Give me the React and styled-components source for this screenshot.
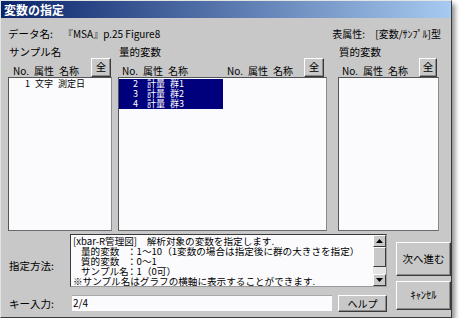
import styled, { createGlobalStyle } from "styled-components";

const GlobalStyle = createGlobalStyle`
  body {
    margin: 0;
    background: #ffffff;
    font-family: "Noto Sans CJK JP", "Liberation Sans", sans-serif;
  }
`;

const Window = styled.div`
  width: 452px;
  height: 318px;
  box-sizing: border-box;
  background: #c8c8c8;
  border: 1px solid;
  border-color: #e4e4e4 #3a3a3a #3a3a3a #e4e4e4;
  box-shadow: 3px 4px 5px rgba(0, 0, 0, 0.45);
  display: flex;
  flex-direction: column;
  font-size: 10px;
  color: #000;
`;

const TitleBar = styled.div`
  flex: none;
  height: 17px;
  background: linear-gradient(to right, #0a246a, #a6caf0);
  color: #fff;
  font-weight: bold;
  font-size: 12px;
  line-height: 17px;
  padding-left: 3px;
`;

const Content = styled.div`
  flex: 1;
  display: flex;
  flex-direction: column;
  padding: 0 10px 0 7px;
`;

const TopRow = styled.div`
  display: flex;
  align-items: center;
  height: 14px;
  margin-top: 9px;
  line-height: 14px;
`;

const Label = styled.span`
  display: inline-block;
  width: ${(p) => p.$width || "auto"};
  font-size: ${(p) => p.$size || "10.5px"};
  white-space: pre;
`;

const Spacer = styled.div`
  flex: 1;
`;

const Columns = styled.div`
  display: flex;
  margin-top: 5px;
`;

const Column = styled.div`
  width: ${(p) => p.$width}px;
  margin-left: ${(p) => p.$gap || 0}px;
  display: flex;
  flex-direction: column;
`;

const ColumnTitle = styled.div`
  height: 12px;
  line-height: 12px;
  font-size: 10.5px;
  padding-left: 1px;
`;

const SubRow = styled.div`
  display: flex;
  align-items: flex-end;
  height: 19px;
  padding-right: ${(p) => p.$inset || 1}px;
`;

const HeadCell = styled.div`
  display: flex;
  gap: 5px;
  width: ${(p) => (p.$width ? `${p.$width}px` : "auto")};
  padding-left: ${(p) => p.$indent || 4}px;
  line-height: 12px;
  font-size: 10px;
`;

const RaisedButton = styled.button`
  box-sizing: border-box;
  width: ${(p) => p.$w}px;
  height: ${(p) => p.$h}px;
  padding: 0;
  margin-left: ${(p) => p.$ml || 0}px;
  background: #c8c8c8;
  border: 1px solid;
  border-color: #ffffff #3a3a3a #3a3a3a #ffffff;
  box-shadow: inset -1px -1px 0 #8a8a8a;
  font-family: "Noto Sans CJK JP", "Liberation Sans", sans-serif;
  font-size: ${(p) => p.$size || "10.5px"};
  line-height: 1;
  color: #000;
  cursor: pointer;
`;

const ListBox = styled.div`
  box-sizing: border-box;
  height: 154px;
  background: #fbfbfd;
  border: 1px solid;
  border-color: #555555 #8a8a8a #6a6a6a #555555;
  padding-top: 1px;
`;

const ListRow = styled.div`
  display: flex;
  width: ${(p) => p.$width}px;
  height: 10px;
  line-height: 10px;
  font-size: 9px;
  background: ${(p) => (p.$selected ? "#00007c" : "transparent")};
  color: ${(p) => (p.$selected ? "#ffffff" : "#000")};
`;

const Num = styled.span`
  width: ${(p) => p.$width}px;
  text-align: right;
`;

const Cell = styled.span`
  margin-left: ${(p) => p.$ml}px;
`;

const Bottom = styled.div`
  display: grid;
  grid-template-columns: 53px 317px 55px;
  grid-template-rows: 53px 17px;
  column-gap: 9px;
  row-gap: 8px;
  margin-top: 3px;
`;

const SideLabel = styled.div`
  display: flex;
  align-items: center;
  padding-top: ${(p) => p.$pt || 0}px;
  font-size: 10.5px;
  padding-left: 1px;
`;

const TextArea = styled.div`
  display: flex;
  box-sizing: border-box;
  background: #fbfbfd;
  border: 1px solid;
  border-color: #3a3a3a #9a9a9a #9a9a9a #3a3a3a;
`;

const TextBody = styled.div`
  flex: 1;
  padding: 1px 0 0 2px;
  font-size: 9.6px;
  line-height: 10px;
  white-space: pre;
`;

const Line = styled.div`
  display: flex;
  height: 10px;
  padding-left: ${(p) => p.$indent || 0}px;
`;

const Key = styled.span`
  width: 46px;
`;

const ScrollBar = styled.div`
  flex: none;
  width: 13px;
  display: flex;
  flex-direction: column;
  background: #e6e6e6;
`;

const ScrollButton = styled.div`
  box-sizing: border-box;
  height: ${(p) => p.$h}px;
  background: #c8c8c8;
  border: 1px solid;
  border-color: #ffffff #3a3a3a #3a3a3a #ffffff;
  display: flex;
  align-items: center;
  justify-content: center;
`;

const Track = styled.div`
  flex: 1;
`;

const KeyRow = styled.div`
  display: flex;
  align-items: flex-start;
`;

const Input = styled.div`
  box-sizing: border-box;
  width: 260px;
  height: 16px;
  margin-left: 2px;
  background: #fbfbfd;
  border-top: 1px solid #a8a8a8;
  padding-left: 1px;
  font-size: 10px;
  line-height: 14px;
`;

const ButtonStack = styled.div`
  grid-row: 1 / 3;
  grid-column: 3;
  display: flex;
  flex-direction: column;
  gap: 5px;
  padding-top: 8px;
`;

const Arrow = ({ up }) => (
  <svg width="7" height="4" viewBox="0 0 7 4">
    <polygon points={up ? "3.5,0 7,4 0,4" : "0,0 7,0 3.5,4"} fill="#000" />
  </svg>
);

const HeaderLabels = ({ width, indent }) => (
  <HeadCell $width={width} $indent={indent}>
    <span>No.</span>
    <span>属性</span>
    <span>名称</span>
  </HeadCell>
);

const groups = [
  { no: 2, kind: "計量", name: "群1" },
  { no: 3, kind: "計量", name: "群2" },
  { no: 4, kind: "計量", name: "群3" },
];

export default function App() {
  return (
    <>
      <GlobalStyle />
      <Window>
        <TitleBar>変数の指定</TitleBar>
        <Content>
          <TopRow>
            <Label $width="55px">データ名:</Label>
            <Label $size="10px">『MSA』p.25 Figure8</Label>
            <Spacer />
            <Label $size="10px" $width="43px">表属性:</Label>
            <Label $size="10px">[変数/ｻﾝﾌﾟﾙ]型</Label>
          </TopRow>

          <Columns>
            <Column $width={104}>
              <ColumnTitle>サンプル名</ColumnTitle>
              <SubRow>
                <HeaderLabels indent={5} />
                <Spacer />
                <RaisedButton $w={20} $h={19}>全</RaisedButton>
              </SubRow>
              <ListBox>
                <ListRow $width={100}>
                  <Num $width={21}>1</Num>
                  <Cell $ml={5}>文字</Cell>
                  <Cell $ml={5}>測定日</Cell>
                </ListRow>
              </ListBox>
            </Column>

            <Column $width={209} $gap={6}>
              <ColumnTitle>量的変数</ColumnTitle>
              <SubRow $inset={3}>
                <HeaderLabels width={101} indent={4} />
                <HeaderLabels indent={0} />
                <Spacer />
                <RaisedButton $w={20} $h={19}>全</RaisedButton>
              </SubRow>
              <ListBox>
                {groups.map((g) => (
                  <ListRow key={g.no} $width={104} $selected>
                    <Num $width={19}>{g.no}</Num>
                    <Cell $ml={9}>{g.kind}</Cell>
                    <Cell $ml={5}>{g.name}</Cell>
                  </ListRow>
                ))}
              </ListBox>
            </Column>

            <Column $width={101} $gap={11}>
              <ColumnTitle>質的変数</ColumnTitle>
              <SubRow $inset={2}>
                <HeaderLabels indent={4} />
                <Spacer />
                <RaisedButton $w={18} $h={19}>全</RaisedButton>
              </SubRow>
              <ListBox />
            </Column>
          </Columns>

          <Bottom>
            <SideLabel $pt={10}>指定方法:</SideLabel>
            <TextArea>
              <TextBody>
                <Line>[xbar-R管理図]　解析対象の変数を指定します.</Line>
                <Line $indent={8}>
                  <Key>量的変数</Key>
                  <span>：1～10（1変数の場合は指定後に群の大きさを指定）</span>
                </Line>
                <Line $indent={8}>
                  <Key>質的変数</Key>
                  <span>：0～1</span>
                </Line>
                <Line $indent={8}>
                  <Key>サンプル名</Key>
                  <span>：1（0可）</span>
                </Line>
                <Line>※サンプル名はグラフの横軸に表示することができます.</Line>
              </TextBody>
              <ScrollBar>
                <ScrollButton $h={12}>
                  <Arrow up />
                </ScrollButton>
                <ScrollButton $h={20} />
                <Track />
                <ScrollButton $h={12}>
                  <Arrow />
                </ScrollButton>
              </ScrollBar>
            </TextArea>
            <ButtonStack>
              <RaisedButton $w={55} $h={34}>次へ進む</RaisedButton>
              <RaisedButton $w={55} $h={29}>ｷｬﾝｾﾙ</RaisedButton>
            </ButtonStack>

            <SideLabel>キー入力:</SideLabel>
            <KeyRow>
              <Input>2/4</Input>
              <RaisedButton $w={49} $h={17} $ml={6} $size="10px">ヘルプ</RaisedButton>
            </KeyRow>
          </Bottom>
        </Content>
      </Window>
    </>
  );
}
